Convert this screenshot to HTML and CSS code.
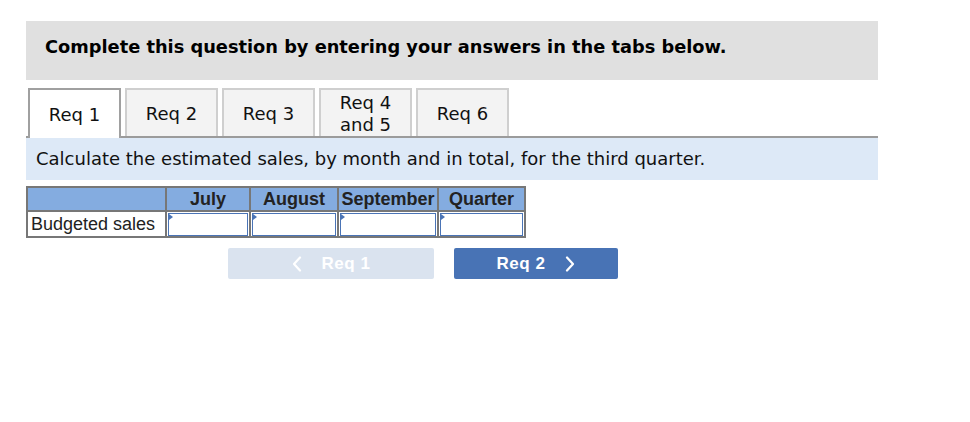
FILE: index.html
```html
<!DOCTYPE html>
<html>
<head>
<meta charset="utf-8">
<link rel="stylesheet" href="styles.css">
</head>
<body>
<div class="page">
  <div class="banner">Complete this question by entering your answers in the tabs below.</div>
  <div class="tabs">
    <div class="tab active">Req 1</div>
    <div class="tab">Req 2</div>
    <div class="tab">Req 3</div>
    <div class="tab">Req 4<br>and 5</div>
    <div class="tab">Req 6</div>
  </div>
  <div class="instruction">Calculate the estimated sales, by month and in total, for the third quarter.</div>
  <table class="grid">
    <colgroup>
      <col class="c-label"><col class="c-july"><col class="c-aug"><col class="c-sep"><col class="c-qtr">
    </colgroup>
    <thead>
      <tr><th></th><th>July</th><th>August</th><th>September</th><th>Quarter</th></tr>
    </thead>
    <tbody>
      <tr>
        <td class="label">Budgeted sales</td>
        <td class="cell"><div class="inp"></div></td>
        <td class="cell"><div class="inp"></div></td>
        <td class="cell"><div class="inp"></div></td>
        <td class="cell"><div class="inp"></div></td>
      </tr>
    </tbody>
  </table>
  <div class="nav">
    <div class="btn prev"><svg class="chev" width="10" height="16" viewBox="0 0 10 16"><path d="M8 1.5 L2 8 L8 14.5" fill="none" stroke="#fff" stroke-width="2.2" stroke-linecap="round" stroke-linejoin="round"/></svg><span>Req 1</span></div>
    <div class="btn next"><span>Req 2</span><svg class="chev" width="10" height="16" viewBox="0 0 10 16"><path d="M2 1.5 L8 8 L2 14.5" fill="none" stroke="#fff" stroke-width="2.2" stroke-linecap="round" stroke-linejoin="round"/></svg></div>
  </div>
</div>
</body>
</html>
```
FILE: styles.css
```css
html, body { margin: 0; padding: 0; background: #fff; }
.page { padding: 21px 0 0 26px; width: 852px; font-family: "DejaVu Sans", Verdana, sans-serif; color: #111; }
.banner { background: #e0e0e0; height: 59px; box-sizing: border-box; padding: 15px 0 0 19px; font-weight: bold; font-size: 17.8px; line-height: 22px; color: #000; }
.tabs { display: flex; gap: 4px; margin-top: 8px; padding-left: 2px; border-bottom: 2px solid #9b9b9b; height: 48px; }
.tab { width: 93px; height: 48px; box-sizing: border-box; border: 2px solid #cfcfcf; border-bottom: none; background: #f3f3f3; display: flex; align-items: center; justify-content: center; text-align: center; font-size: 18px; line-height: 22px; color: #111; padding-top: 1px; }
.tab.active { background: #fff; border-color: #a0a0a0; height: 50px; margin-bottom: -2px; }
.instruction { background: #dde9f7; height: 42px; box-sizing: border-box; padding: 10px 0 0 10px; font-size: 18px; line-height: 22px; color: #111; }
.grid { margin-top: 6px; border-collapse: collapse; font-family: "Liberation Sans", Arial, sans-serif; table-layout: fixed; width: 498px; }
.c-label { width: 139px; } .c-july { width: 84px; } .c-aug { width: 88px; } .c-sep { width: 100px; } .c-qtr { width: 87px; }
.grid th, .grid td { border: 2px solid #777; padding: 0; }
.grid th { background: #84ace0; height: 22px; font-size: 18px; font-weight: bold; color: #222; line-height: 20px; text-align: center; }
.grid td { height: 24px; background: #fff; }
.grid td.label { font-size: 18px; color: #222; padding-left: 3px; line-height: 22px; white-space: nowrap; }
.grid td.cell { padding: 0 1px; }
.inp { position: relative; height: 23px; border: 1px solid #4a74b6; box-sizing: border-box; background: #fff; }
.inp::before { content: ""; position: absolute; left: 0; top: 0; border-left: 4px solid #4a74b6; border-top: 3px solid transparent; border-bottom: 3px solid transparent; }
.nav { display: flex; gap: 20px; margin-top: 10px; padding-left: 202px; }
.btn { height: 31px; border-radius: 2px; display: flex; align-items: center; justify-content: center; gap: 20px; color: #fff; font-family: "Liberation Sans", Arial, sans-serif; font-weight: bold; font-size: 17px; letter-spacing: 0.5px; box-sizing: border-box; }
.btn.prev { width: 206px; background: #dae3ef; }
.btn.next { width: 164px; background: #4873b5; }
.chev { display: block; }
```
